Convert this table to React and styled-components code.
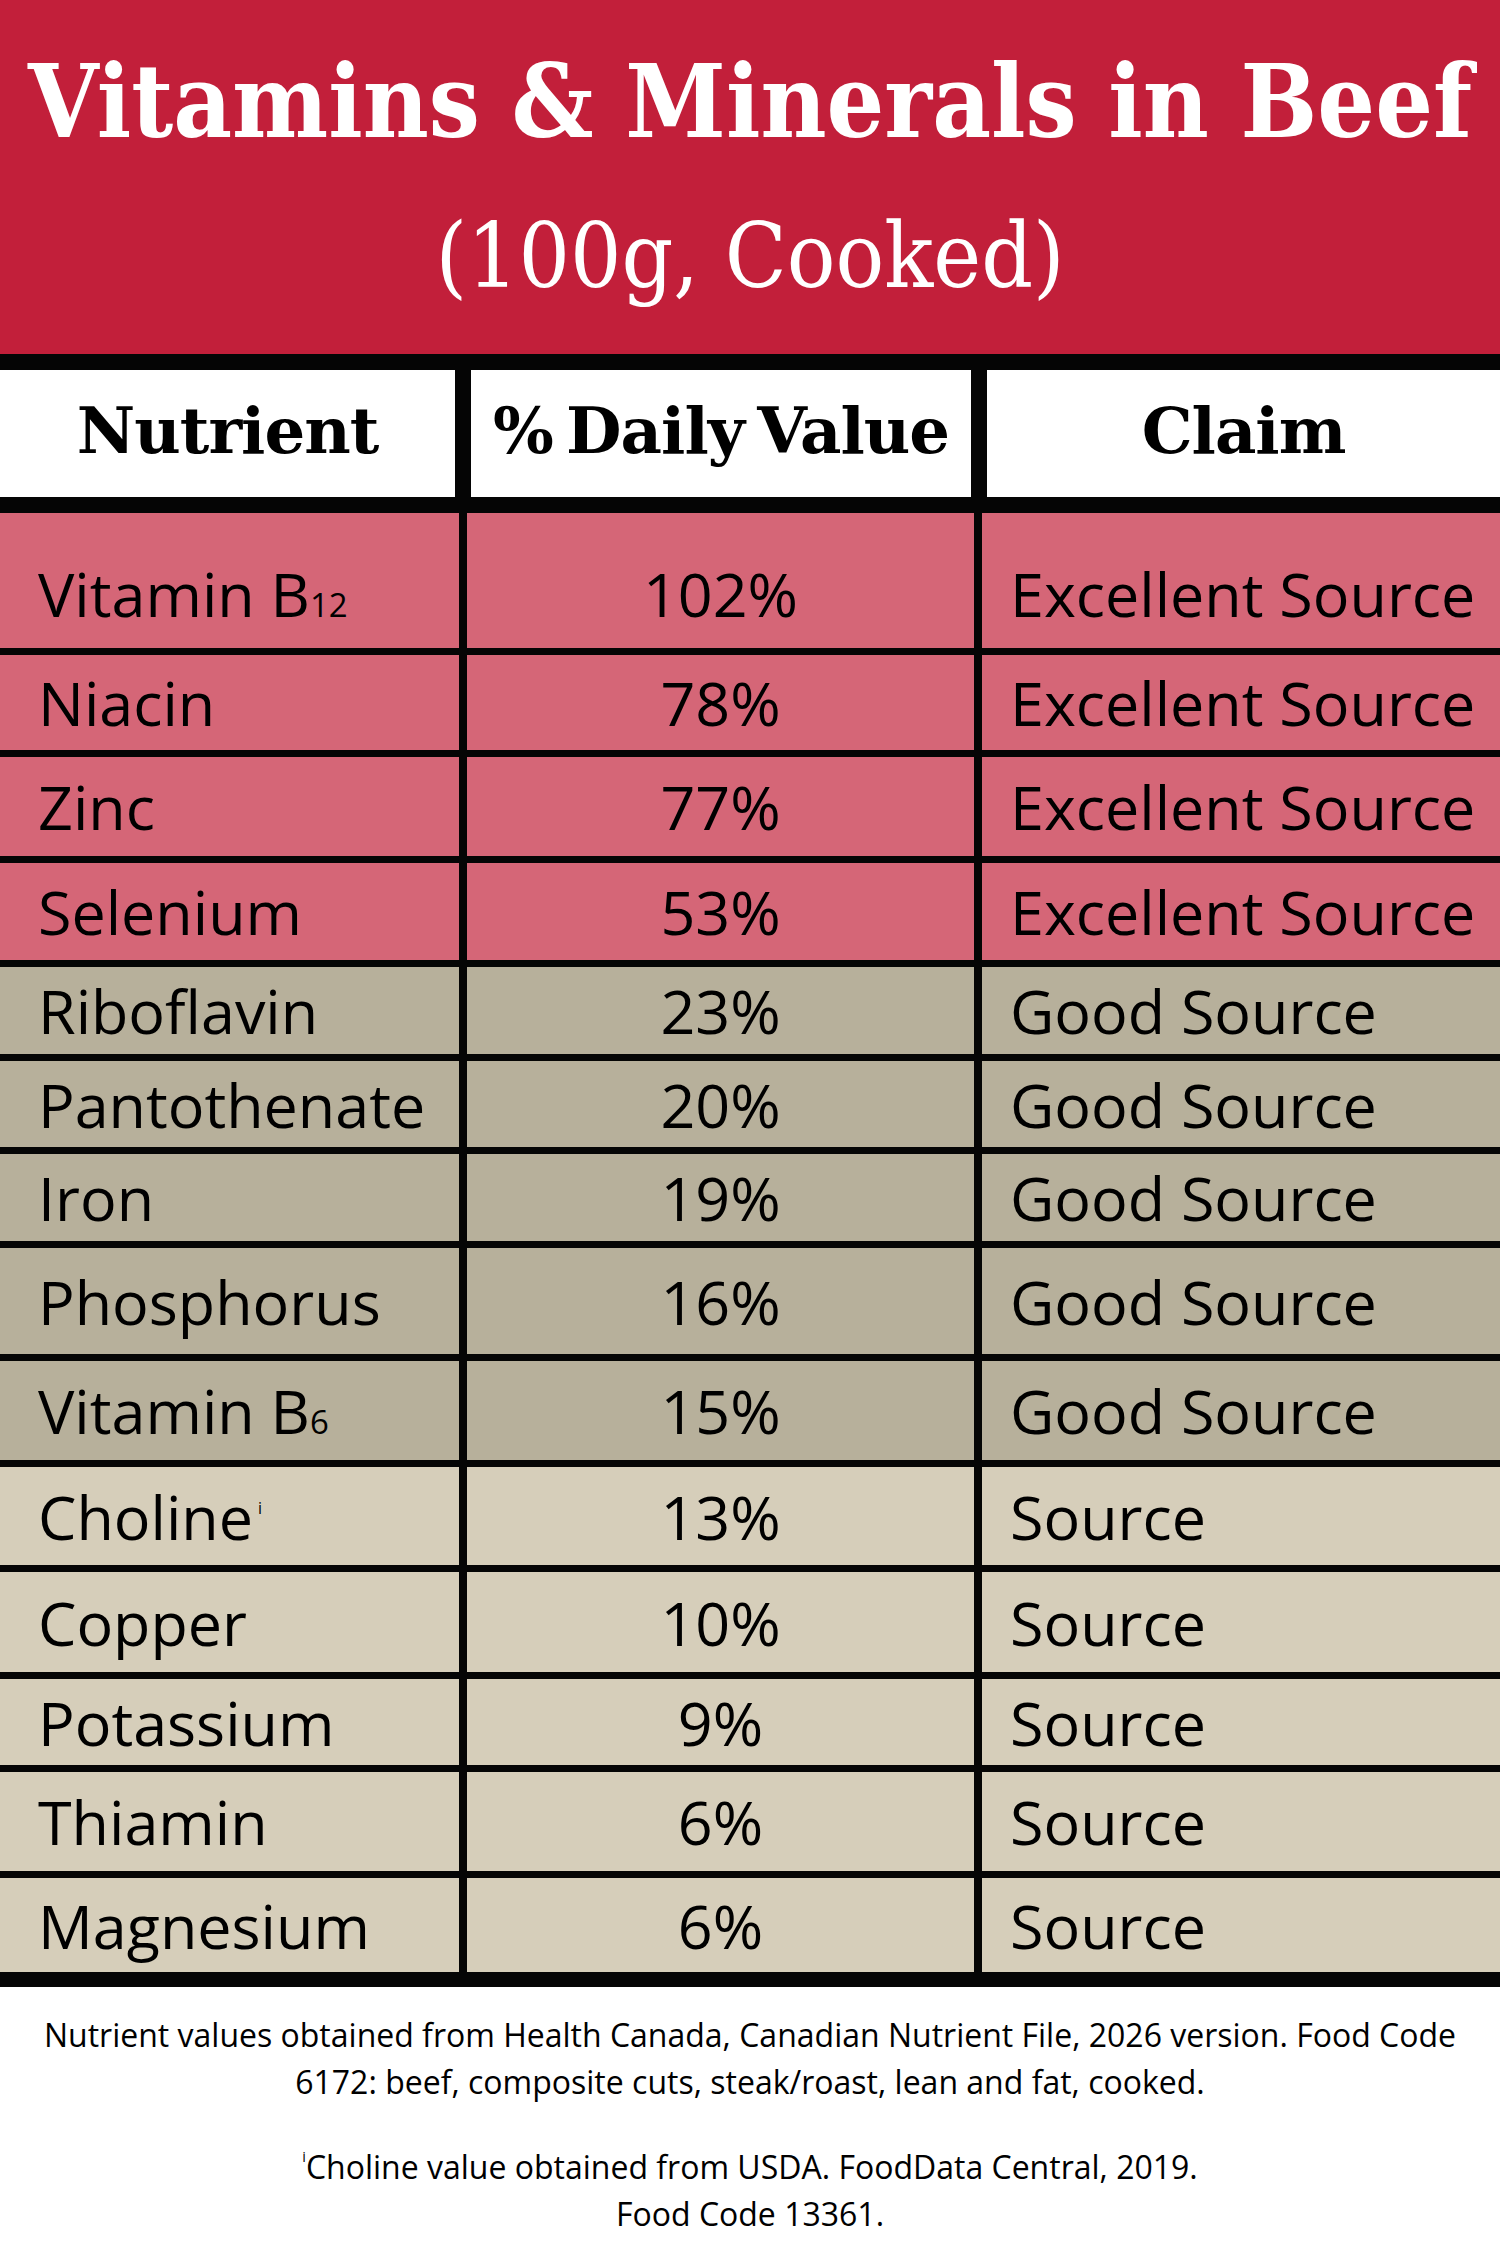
import React from "react";
import styled, { createGlobalStyle } from "styled-components";

const GlobalStyle = createGlobalStyle`
  body {
    margin: 0;
    background: #ffffff;
  }
`;

const SLAB = `"DejaVu Serif", "Liberation Serif", serif`;
const SLAB_NARROW = `"DejaVu Serif Condensed", "DejaVu Serif", "Liberation Serif", serif`;
const SANS = `"Open Sans", "Noto Sans", "Liberation Sans", sans-serif`;

const tiers = {
  excellent: "#d56677",
  good: "#b7b09b",
  source: "#d6ceba",
};

const Page = styled.div`
  width: 1500px;
  background: #ffffff;
`;

const Banner = styled.header`
  height: 354px;
  background: #c21f3a;
  color: #ffffff;
  display: flex;
  flex-direction: column;
  align-items: center;
  font-family: ${SLAB_NARROW};
`;

const Title = styled.h1`
  margin: 42px 0 0;
  font-size: 101px;
  font-weight: 700;
  font-stretch: condensed;
  line-height: 120px;
  white-space: nowrap;
`;

const Subtitle = styled.div`
  margin-top: 44px;
  font-size: 90px;
  font-weight: 400;
  font-stretch: condensed;
  line-height: 100px;
`;

const Table = styled.section`
  background: #050505;
  padding: 16px 0 15px;
`;

const HeadRow = styled.div`
  display: grid;
  grid-template-columns: 455px 500px 1fr;
  column-gap: 16px;
  height: 127px;
  margin-bottom: 16px;
`;

const HeadCell = styled.div`
  background: #ffffff;
  display: flex;
  align-items: center;
  justify-content: center;
  font-family: ${SLAB};
  font-weight: 700;
  font-size: 64px;
  letter-spacing: -1px;
  word-spacing: -8px;
  color: #000;
  white-space: nowrap;
  padding-bottom: 6px;
`;

const Body = styled.div`
  display: flex;
  flex-direction: column;
  gap: 7px;
`;

const Row = styled.div`
  display: grid;
  grid-template-columns: 459px 507px 1fr;
  column-gap: 8px;
  height: ${(p) => p.$h}px;
`;

const Cell = styled.div`
  background: ${(p) => tiers[p.$tier]};
  display: flex;
  align-items: center;
  justify-content: ${(p) => (p.$center ? "center" : "flex-start")};
  padding: ${(p) => (p.$lift ? "26px" : "0")} ${(p) => (p.$center ? "0" : "28px")} 0 ${(p) =>
      p.$center ? "0" : p.$first ? "38px" : "28px"};
  font-family: ${SANS};
  font-size: 61px;
  color: #000;
  white-space: nowrap;
  line-height: 1;
`;

const Label = styled.span`
  display: inline-block;
`;

const Sub = styled.span`
  font-size: 0.54em;
`;

const Sup = styled.sup`
  font-size: 0.26em;
  vertical-align: 1.6em;
  margin-left: 5px;
`;

const Notes = styled.footer`
  padding: 24px 30px 0;
  text-align: center;
  font-family: ${SANS};
  font-size: 32px;
  color: #000;
`;

const Note = styled.p`
  margin: 0 0 28px;
  line-height: 47px;
`;

const NoteMark = styled.sup`
  font-size: 0.45em;
  vertical-align: 1.2em;
`;

const rows = [
  { name: <>Vitamin B<Sub>12</Sub></>, dv: "102%", claim: "Excellent Source", tier: "excellent", h: 135, lift: true },
  { name: "Niacin", dv: "78%", claim: "Excellent Source", tier: "excellent", h: 95 },
  { name: "Zinc", dv: "77%", claim: "Excellent Source", tier: "excellent", h: 99 },
  { name: "Selenium", dv: "53%", claim: "Excellent Source", tier: "excellent", h: 97 },
  { name: "Riboflavin", dv: "23%", claim: "Good Source", tier: "good", h: 87 },
  { name: "Pantothenate", dv: "20%", claim: "Good Source", tier: "good", h: 86 },
  { name: "Iron", dv: "19%", claim: "Good Source", tier: "good", h: 87 },
  { name: "Phosphorus", dv: "16%", claim: "Good Source", tier: "good", h: 106 },
  { name: <>Vitamin B<Sub>6</Sub></>, dv: "15%", claim: "Good Source", tier: "good", h: 99 },
  { name: <>Choline<Sup>i</Sup></>, dv: "13%", claim: "Source", tier: "source", h: 98 },
  { name: "Copper", dv: "10%", claim: "Source", tier: "source", h: 100 },
  { name: "Potassium", dv: "9%", claim: "Source", tier: "source", h: 86 },
  { name: "Thiamin", dv: "6%", claim: "Source", tier: "source", h: 99 },
  { name: "Magnesium", dv: "6%", claim: "Source", tier: "source", h: 94 },
];

export default function App() {
  return (
    <Page>
      <GlobalStyle />
      <Banner>
        <Title>Vitamins &amp; Minerals in Beef</Title>
        <Subtitle>(100g, Cooked)</Subtitle>
      </Banner>
      <Table>
        <HeadRow>
          <HeadCell>Nutrient</HeadCell>
          <HeadCell>% Daily Value</HeadCell>
          <HeadCell>Claim</HeadCell>
        </HeadRow>
        <Body>
          {rows.map((r, i) => (
            <Row key={i} $h={r.h}>
              <Cell $tier={r.tier} $first $lift={r.lift}>
                <Label>{r.name}</Label>
              </Cell>
              <Cell $tier={r.tier} $center $lift={r.lift}>
                <Label>{r.dv}</Label>
              </Cell>
              <Cell $tier={r.tier} $lift={r.lift}>
                <Label>{r.claim}</Label>
              </Cell>
            </Row>
          ))}
        </Body>
      </Table>
      <Notes>
        <Note>
          Nutrient values obtained from Health Canada, Canadian Nutrient File, 2026 version. Food Code
          <br />
          6172: beef, composite cuts, steak/roast, lean and fat, cooked.
        </Note>
        <Note>
          <NoteMark>i</NoteMark>Choline value obtained from USDA. FoodData Central, 2019.
          <br />
          Food Code 13361.
        </Note>
      </Notes>
    </Page>
  );
}
